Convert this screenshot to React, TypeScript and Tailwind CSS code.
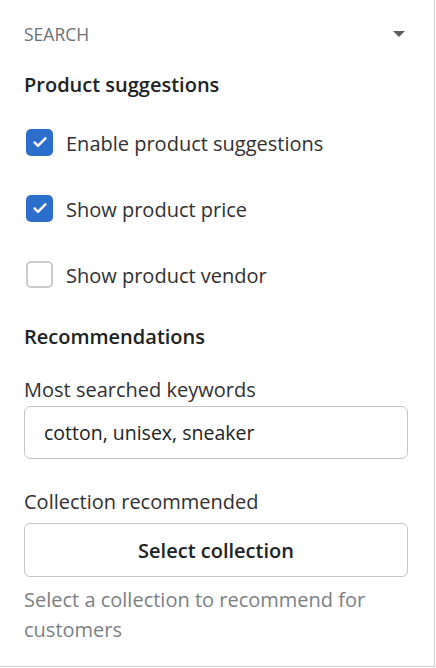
import React from "react";

const font = { fontFamily: '"Open Sans", "Noto Sans", sans-serif' };

function Check({ checked, label }: { checked: boolean; label: string }) {
  return (
    <div className="flex items-center h-[28px]">
      {checked ? (
        <div className="ml-[2px] w-[27px] h-[27px] rounded-[5px] bg-[#2c6ecb] flex items-center justify-center">
          <svg width="18" height="18" viewBox="0 0 16 16" fill="none">
            <path d="M3.2 8.4l3 3L12.8 4.8" stroke="white" strokeWidth="2.2" strokeLinecap="round" strokeLinejoin="round" />
          </svg>
        </div>
      ) : (
        <div className="ml-[2px] w-[27px] h-[27px] rounded-[5px] border-2 border-[#c9cccf] bg-white" />
      )}
      <span className="ml-[13px] pt-[3px] text-[20px] text-[#303030]">{label}</span>
    </div>
  );
}

export default function App() {
  return (
    <div style={font} className="w-[435px] h-[667px] border-r border-b border-[#cfcfcf] bg-white pl-6 pr-[26px] pt-[22px] flex flex-col">
      <div className="flex items-center justify-between h-6">
        <span className="text-[17.5px] text-[#6d7175]">SEARCH</span>
        <svg className="mr-[3px]" width="12" height="8" viewBox="0 0 12 8">
          <path d="M0 1h12L6 7z" fill="#5c5f62" />
        </svg>
      </div>
      <div className="mt-6 pt-[2px] h-[28px] flex items-center text-[20px] font-semibold text-[#202223]">Product suggestions</div>
      <div className="mt-[30px] flex flex-col gap-[38px]">
        <Check checked label="Enable product suggestions" />
        <Check checked label="Show product price" />
        <Check checked={false} label="Show product vendor" />
      </div>
      <div className="mt-[33px] pt-[3px] h-[28px] flex items-center text-[20px] font-semibold text-[#202223]">Recommendations</div>
      <div className="mt-[26px] pt-[2px] h-[28px] flex items-center text-[20px] text-[#303030]">Most searched keywords</div>
      <div className="mt-[3px] h-[53px] rounded-[6px] border border-[#c4c7ca] flex items-center pl-[19px] pt-[1px] text-[19.5px] text-[#202223]">
        cotton, unisex, sneaker
      </div>
      <div className="mt-[27px] pt-[3px] h-[28px] flex items-center text-[20px] text-[#303030]">Collection recommended</div>
      <button className="mt-[9px] h-[54px] pt-[2px] rounded-[6px] border border-[#c4c7ca] bg-white flex items-center justify-center text-[20px] font-semibold text-[#202223]" style={font}>
        Select collection
      </button>
      <div className="mt-[8px] text-[20px] leading-[30px] text-[#7b7f83]">
        Select a collection to recommend for customers
      </div>
    </div>
  );
}
